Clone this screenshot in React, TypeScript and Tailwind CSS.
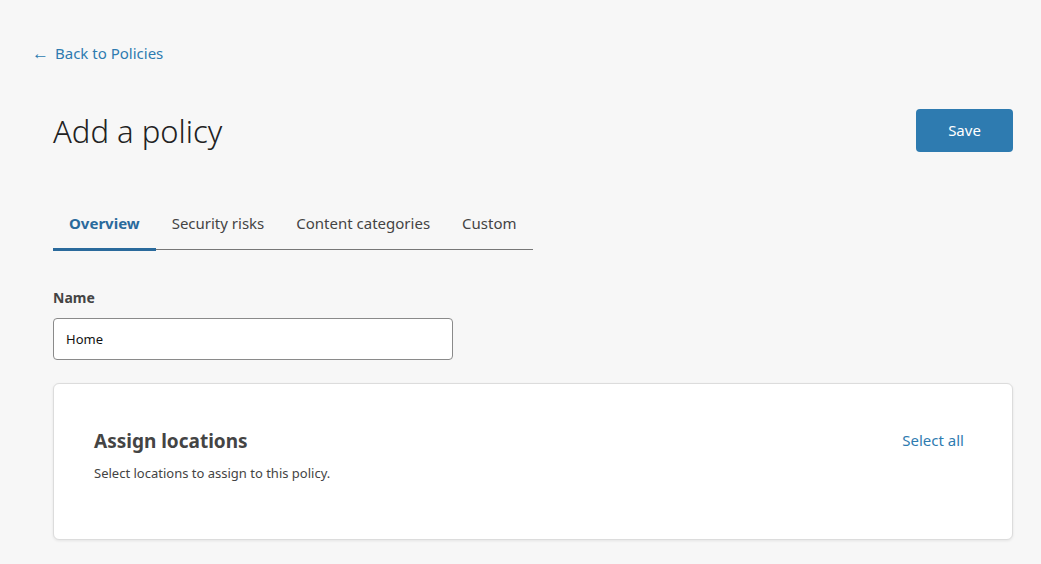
export default function App() {
  const tabs = ["Overview", "Security risks", "Content categories", "Custom"];

  return (
    <div className="min-h-screen bg-[#f7f7f7] font-['Noto_Sans',sans-serif] text-[#333]">
      <div className="px-[32px] pt-[42px]">
        <a href="#" className="flex items-center gap-[6px] text-[15px] leading-[22px] text-[#2e7bb0]">
          <span className="text-[17px] leading-[22px]">←</span>
          <span>Back to Policies</span>
        </a>
      </div>

      <div className="px-[53px] pr-[28px]">
        {/* Header */}
        <div className="mt-[44px] flex items-center justify-between">
          <h1 className="pt-[2px] text-[31px] font-light leading-[42px] text-[#222]">Add a policy</h1>
          <button className="h-[43px] w-[97px] rounded-[4px] bg-[#2e7bb0] text-[15px] text-white">
            Save
          </button>
        </div>

        {/* Tabs */}
        <div className="mt-[60px] flex w-fit border-b border-[#777]">
          {tabs.map((t, i) => (
            <div
              key={t}
              className={
                i === 0
                  ? "-mb-[2px] whitespace-nowrap border-b-[3px] border-[#2a6a9c] px-4 pb-[13px] text-[15px] font-bold text-[#2a6a9c]"
                  : "whitespace-nowrap px-4 pb-[14px] text-[15px] text-[#444]"
              }
            >
              {t}
            </div>
          ))}
        </div>

        {/* Name field */}
        <div className="mt-[38px]">
          <label className="block text-[14px] font-bold leading-[20px] text-[#444]">Name</label>
          <input
            defaultValue="Home"
            className="mt-[10px] h-[42px] w-[400px] rounded-[4px] border border-[#8a8a8a] bg-white px-[12px] text-[13px] text-[#111] outline-none"
          />
        </div>

        {/* Card */}
        <div className="mt-[23px] h-[157px] rounded-[6px] border border-[#dcdcdc] bg-white px-[40px] pt-[44px] shadow-[0_1px_3px_rgba(0,0,0,0.08)]">
          <div className="flex items-center justify-between">
            <h2 className="text-[19px] font-bold leading-[26px] text-[#444]">Assign locations</h2>
            <a href="#" className="mr-[8px] text-[15px] text-[#2e7bb0]">
              Select all
            </a>
          </div>
          <p className="mt-[10px] text-[13px] leading-[18px] text-[#444]">
            Select locations to assign to this policy.
          </p>
        </div>
      </div>
    </div>
  );
}
